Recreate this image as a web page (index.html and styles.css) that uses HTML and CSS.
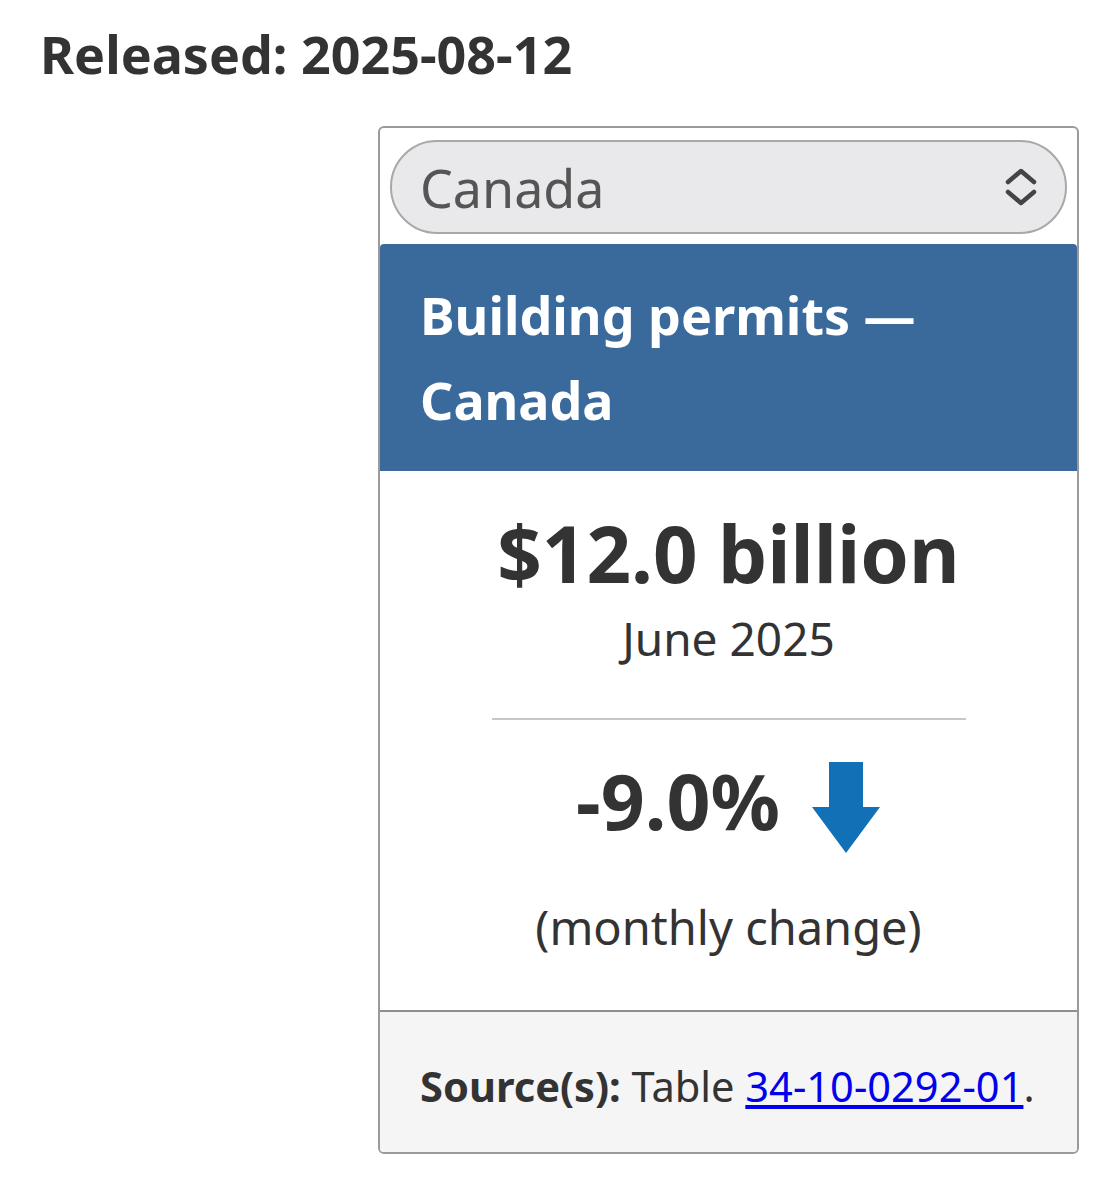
FILE: index.html
```html
<!DOCTYPE html>
<html lang="en">
<head>
    <meta charset="UTF-8">
    <meta name="viewport" content="width=device-width, initial-scale=1.0">
    <title>Building permits</title>
    <link rel="stylesheet" href="styles.css">
</head>
<body>

<h2 class="released">Released: 2025-08-12</h2>

<div class="card">
    <div class="select-wrap">
        <div class="select">
            <span>Canada</span>
            <svg class="chevrons" width="36" height="40" viewBox="0 0 36 40">
                <path d="M5 15 L18 4 L31 15" fill="none" stroke="#444" stroke-width="4.5" stroke-linecap="round" stroke-linejoin="round"/>
                <path d="M5 25 L18 36 L31 25" fill="none" stroke="#444" stroke-width="4.5" stroke-linecap="round" stroke-linejoin="round"/>
            </svg>
        </div>
    </div>

    <div class="card-header">Building permits — Canada</div>

    <div class="card-body">
        <div class="value">$12.0 billion</div>
        <div class="period">June 2025</div>
        <hr>
        <div class="change">
            <span>-9.0%</span>
            <svg class="arrow" width="70" height="92" viewBox="0 0 70 92">
                <polygon points="18,0 52,0 52,45 69,45 35,91 1,45 18,45" fill="#1170b6"/>
            </svg>
        </div>
        <div class="note">(monthly change)</div>
    </div>

    <div class="card-footer">
        <strong>Source(s):</strong> Table <a href="#">34-10-0292-01</a>.
    </div>
</div>

</body>
</html>
```

FILE: styles.css
```css
body {
    font-family: "Noto Sans", "Open Sans", sans-serif;
    color: #333333;
    background-color: #ffffff;
    margin: 0;
    padding: 0 40px 40px 40px;
}
.released {
    font-size: 52px;
    font-weight: bold;
    line-height: 74px;
    margin: 17px 0 35px 0;
}
.card {
    margin-left: 338px;
    width: 697px;
    border: 2px solid #9a9a9a;
    border-radius: 6px;
    overflow: hidden;
}
.select-wrap {
    padding: 12px 10px 10px 10px;
}
.select {
    display: flex;
    align-items: center;
    justify-content: space-between;
    height: 90px;
    padding: 0 26px 0 28px;
    background-color: #e9e9eb;
    border: 2px solid #a8a8a8;
    border-radius: 48px;
    color: #555555;
    font-size: 52px;
}
.card-header {
    background-color: #3a6a9c;
    color: #ffffff;
    font-size: 52px;
    font-weight: bold;
    line-height: 85px;
    padding: 28px 120px 29px 40px;
    border-radius: 4px 4px 0 0;
}
.card-body {
    text-align: center;
    padding: 36px 0 50px 0;
}
.value {
    font-size: 78px;
    font-weight: bold;
    line-height: 92px;
}
.period {
    font-size: 46px;
    line-height: 62px;
    margin-top: 8px;
}
.card-body hr {
    width: 474px;
    border: none;
    border-top: 2px solid #c8c8c8;
    margin: 49px auto 28px auto;
}
.change {
    display: flex;
    justify-content: center;
    align-items: center;
    gap: 31px;
    font-size: 77px;
    font-weight: bold;
    line-height: 100px;
}
.change .arrow {
    margin-top: 14px;
}
.note {
    font-size: 47px;
    line-height: 66px;
    margin-top: 40px;
}
.card-footer {
    background-color: #f5f5f5;
    border-top: 2px solid #8f8f8f;
    padding: 46px 10px 38px 40px;
    font-size: 41.6px;
    line-height: 56px;
    white-space: nowrap;
}
.card-footer a {
    color: #0000ee;
}
```
